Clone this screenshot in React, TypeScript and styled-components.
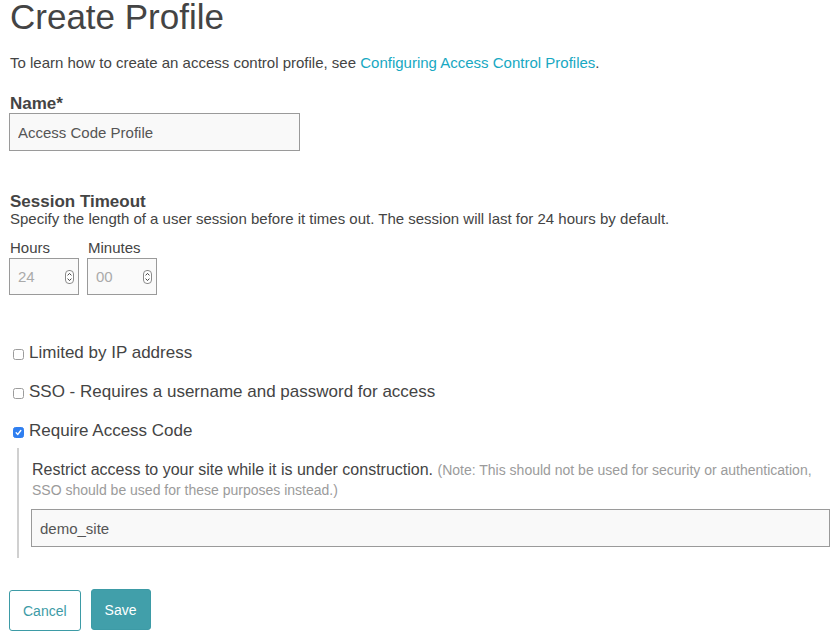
import React from "react";
import styled, { createGlobalStyle } from "styled-components";

const Global = createGlobalStyle`
  html, body { margin: 0; padding: 0; background: #fff; }
  body { font-family: "Liberation Sans", Arial, sans-serif; color: #444; }
  * { box-sizing: border-box; }
`;

const Page = styled.div`
  padding: 0 9px;
  display: flex;
  flex-direction: column;
`;

const Title = styled.h1`
  margin: 0 0 0 1px;
  font-size: 35px;
  line-height: 34px;
  font-weight: 400;
  color: #444;
`;

const Intro = styled.p`
  margin: 19px 0 0 1px;
  font-size: 15px;
  line-height: 20px;
`;

const Link = styled.a`
  color: #17a8c2;
  text-decoration: none;
`;

const FieldLabel = styled.label`
  display: block;
  margin: 21px 0 0 1px;
  font-size: 17px;
  line-height: 19px;
  font-weight: 700;
  color: #444;
`;

const TextInput = styled.input<{ $wide?: boolean }>`
  display: block;
  width: ${(p) => (p.$wide ? "100%" : "291px")};
  height: 38px;
  border: 1px solid #9a9a9a;
  background: #f9f9f9;
  padding: 0 8px;
  font-family: inherit;
  font-size: 15px;
  color: #555;
  outline: none;
`;

const SectionTitle = styled.h2`
  margin: 42px 0 0 1px;
  font-size: 17px;
  line-height: 17px;
  font-weight: 700;
`;

const Description = styled.p`
  margin: 0 0 0 1px;
  font-size: 15px;
  line-height: 18px;
`;

const TimeRow = styled.div`
  display: flex;
  gap: 8px;
  margin-top: 10px;
`;

const TimeField = styled.div`
  display: flex;
  flex-direction: column;
`;

const SmallLabel = styled.span`
  font-size: 15px;
  line-height: 20px;
  margin-left: 1px;
`;

const NumberBox = styled.div`
  display: flex;
  align-items: center;
  justify-content: space-between;
  width: 70px;
  height: 37px;
  border: 1px solid #9a9a9a;
  background: #fafafa;
  padding: 0 4px 0 8px;
  font-size: 15px;
  color: #aaa;
`;

const Spinner = () => (
  <svg width="9" height="14" viewBox="0 0 9 14">
    <rect x="0.5" y="0.5" width="8" height="13" rx="3.5" fill="#fff" stroke="#8a8a8a" />
    <path d="M2.6 5.4 L4.5 3.4 L6.4 5.4" fill="none" stroke="#444" strokeWidth="1" />
    <path d="M2.6 8.6 L4.5 10.6 L6.4 8.6" fill="none" stroke="#444" strokeWidth="1" />
  </svg>
);

const Options = styled.div`
  display: flex;
  flex-direction: column;
  gap: 19px;
  margin-top: 48px;
`;

const OptionRow = styled.label`
  display: flex;
  align-items: center;
  font-size: 17px;
  line-height: 20px;
  color: #444;
`;

const Check = styled.span<{ $checked?: boolean }>`
  display: inline-flex;
  align-items: center;
  justify-content: center;
  width: 11px;
  height: 11px;
  margin: 2px 5px 0 4px;
  border-radius: 2.5px;
  border: 1px solid ${(p) => (p.$checked ? "#2f7ff0" : "#9c9c9c")};
  background: ${(p) => (p.$checked ? "#2f7ff0" : "#fff")};
`;

const CheckMark = () => (
  <svg width="7" height="7" viewBox="0 0 7 7">
    <path d="M1.2 3.8 L2.8 5.4 L5.8 1.5" fill="none" stroke="#fff" strokeWidth="1.4" strokeLinecap="round" strokeLinejoin="round" />
  </svg>
);

const Nested = styled.div`
  margin: 7px 0 0 8px;
  border-left: 2px solid #d0d0d0;
  padding: 12px 0 11px 12px;
  display: flex;
  flex-direction: column;
  gap: 9px;
`;

const NestedText = styled.p`
  margin: 0 0 0 1px;
  font-size: 16px;
  line-height: 19px;
  color: #444;
`;

const Note = styled.span`
  font-size: 14px;
  color: #9b9b9b;
`;

const Actions = styled.div`
  display: flex;
  align-items: flex-start;
  gap: 10px;
  margin-top: 31px;
`;

const Button = styled.button<{ $primary?: boolean }>`
  font-family: inherit;
  font-size: 14px;
  height: 41px;
  padding: 0 13px;
  border-radius: 3px;
  border: 1px solid #3d9ba6;
  background: ${(p) => (p.$primary ? "#419faa" : "#fff")};
  color: ${(p) => (p.$primary ? "#fff" : "#3d9ba6")};
  margin-top: ${(p) => (p.$primary ? "0" : "1px")};
  cursor: pointer;
`;

export default function App() {
  return (
    <>
      <Global />
      <Page>
        <Title>Create Profile</Title>
        <Intro>
          To learn how to create an access control profile, see{" "}
          <Link href="#">Configuring Access Control Profiles</Link>.
        </Intro>

        <FieldLabel htmlFor="name">Name*</FieldLabel>
        <TextInput id="name" defaultValue="Access Code Profile" />

        <SectionTitle>Session Timeout</SectionTitle>
        <Description>
          Specify the length of a user session before it times out. The session will last for 24 hours by default.
        </Description>
        <TimeRow>
          <TimeField>
            <SmallLabel>Hours</SmallLabel>
            <NumberBox>
              <span>24</span>
              <Spinner />
            </NumberBox>
          </TimeField>
          <TimeField>
            <SmallLabel>Minutes</SmallLabel>
            <NumberBox>
              <span>00</span>
              <Spinner />
            </NumberBox>
          </TimeField>
        </TimeRow>

        <Options>
          <OptionRow>
            <Check />
            Limited by IP address
          </OptionRow>
          <OptionRow>
            <Check />
            SSO - Requires a username and password for access
          </OptionRow>
          <OptionRow>
            <Check $checked>
              <CheckMark />
            </Check>
            Require Access Code
          </OptionRow>
        </Options>

        <Nested>
          <NestedText>
            Restrict access to your site while it is under construction.{" "}
            <Note>
              (Note: This should not be used for security or authentication, SSO should be used for these purposes instead.)
            </Note>
          </NestedText>
          <TextInput $wide defaultValue="demo_site" />
        </Nested>

        <Actions>
          <Button>Cancel</Button>
          <Button $primary>Save</Button>
        </Actions>
      </Page>
    </>
  );
}
